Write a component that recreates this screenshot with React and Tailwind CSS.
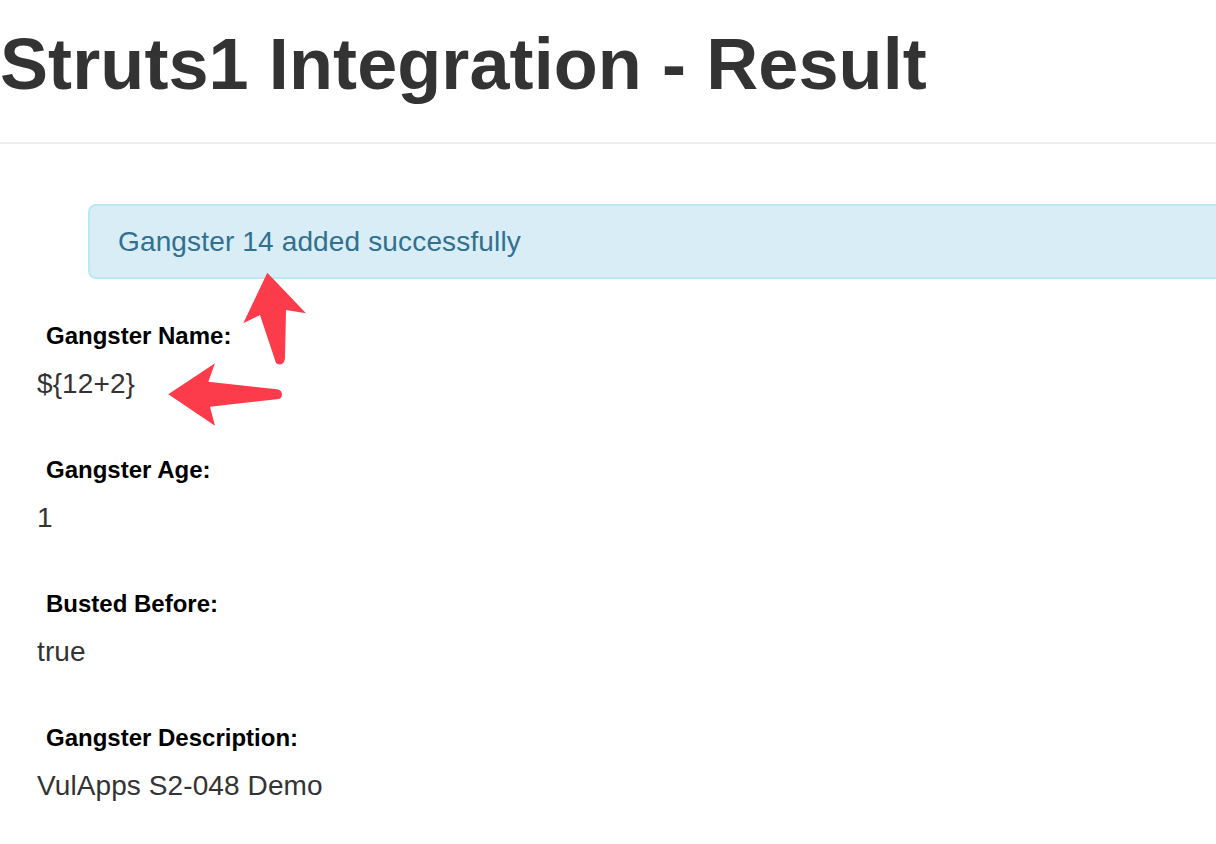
import React from "react";

const fields = [
  { label: "Gangster Name:", value: "${12+2}" },
  { label: "Gangster Age:", value: "1" },
  { label: "Busted Before:", value: "true" },
  { label: "Gangster Description:", value: "VulApps S2-048 Demo" },
];

const Arrows = () => (
  <svg
    className="absolute left-0 top-0 pointer-events-none"
    width="1216"
    height="844"
    viewBox="0 0 1216 844"
  >
    {/* up arrow pointing at the alert */}
    <path
      d="M267.3 272.7 L306 313.3 L286 310 L285 358.3 Q284 365 279.5 364.5 Q275.5 364 275 360 L260 315 L243.3 323.3 Z"
      fill="#fc3b4b"
    />
    {/* left arrow pointing at the name value */}
    <path
      d="M168.3 394.3 L215 363.3 L208.3 381.7 L276.7 389.3 Q282 390 282 394.5 Q282 399 276.7 399.3 L210 406.7 L215 425.7 Z"
      fill="#fc3b4b"
    />
  </svg>
);

export default function App() {
  return (
    <div className="relative w-[1216px] h-[844px] overflow-hidden bg-white font-['Liberation_Sans',Arial,sans-serif]">
      {/* page header */}
      <div className="pt-[25px] pb-[38px] border-b-2 border-[#eee]">
        <h1 className="text-[72px] leading-[79px] font-bold text-[#333] whitespace-nowrap tracking-[0.1px]">
          Struts1 Integration - Result
        </h1>
      </div>

      {/* alert */}
      <div className="mt-[60px] ml-[88px] w-[1200px] border-2 border-[#bce8f1] bg-[#d9edf7] rounded-lg py-[15px] pl-[28px]">
        <p className="text-[28px] leading-[41px] text-[#31708f] tracking-[0.15px]">Gangster 14 added successfully</p>
      </div>

      {/* details */}
      <div className="mt-[40px] ml-[37px]">
        {fields.map((f, i) => (
          <div key={i} className={i === 0 ? "" : "mt-[49px]"}>
            <div className="pl-[9px] text-[24px] leading-[34px] font-bold text-black">{f.label}</div>
            <div className="mt-[11px] text-[28px] leading-[40px] text-[#333] tracking-[0.1px]">{f.value}</div>
          </div>
        ))}
      </div>

      <Arrows />
    </div>
  );
}
